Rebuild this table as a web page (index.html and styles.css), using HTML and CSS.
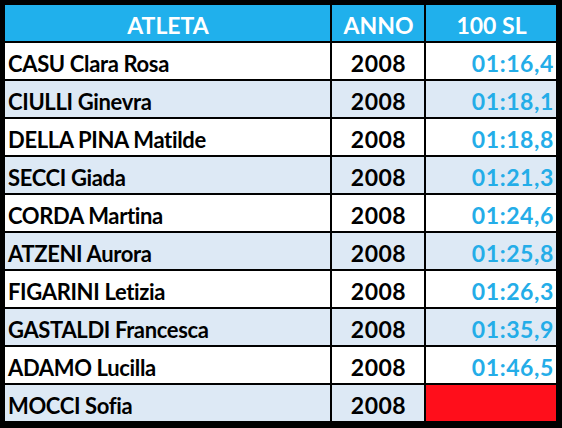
FILE: index.html
```html
<!DOCTYPE html>
<html lang="it">
<head>
<meta charset="utf-8">
<title>Risultati 100 SL</title>
<link rel="stylesheet" href="styles.css">
</head>
<body>
<div class="sheet">
  <div class="cell head">ATLETA</div><div class="cell head">ANNO</div><div class="cell head">100 SL</div>
  <div class="cell name">CASU Clara Rosa</div><div class="cell year">2008</div><div class="cell time">01:16,4</div>
  <div class="cell name alt">CIULLI Ginevra</div><div class="cell year alt">2008</div><div class="cell time alt">01:18,1</div>
  <div class="cell name">DELLA PINA Matilde</div><div class="cell year">2008</div><div class="cell time">01:18,8</div>
  <div class="cell name alt">SECCI Giada</div><div class="cell year alt">2008</div><div class="cell time alt">01:21,3</div>
  <div class="cell name">CORDA Martina</div><div class="cell year">2008</div><div class="cell time">01:24,6</div>
  <div class="cell name alt">ATZENI Aurora</div><div class="cell year alt">2008</div><div class="cell time alt">01:25,8</div>
  <div class="cell name">FIGARINI Letizia</div><div class="cell year">2008</div><div class="cell time">01:26,3</div>
  <div class="cell name alt">GASTALDI Francesca</div><div class="cell year alt">2008</div><div class="cell time alt">01:35,9</div>
  <div class="cell name">ADAMO Lucilla</div><div class="cell year">2008</div><div class="cell time">01:46,5</div>
  <div class="cell name alt">MOCCI Sofia</div><div class="cell year alt">2008</div><div class="cell time missing"></div>
</div>
</body>
</html>
```
FILE: styles.css
```css
html, body {
  margin: 0;
  padding: 0;
  background: #000;
}
.sheet {
  width: 562px;
  height: 428px;
  box-sizing: border-box;
  background: #000;
  padding: 5px 6px 6px 5px;
  display: grid;
  grid-template-columns: 325px 92px 130px;
  grid-template-rows: 36px repeat(10, 36px);
  gap: 2px;
  font-family: Lato, "Liberation Sans", sans-serif;
  font-weight: 700;
  font-size: 22px;
}
.cell {
  background: #fff;
  color: #000;
  display: flex;
  align-items: center;
  padding: 4px 2px 0 3px;
  box-sizing: border-box;
  white-space: nowrap;
  overflow: hidden;
}
.cell.alt {
  background: #dde9f5;
}
.head {
  background: #20b0ec;
  color: #fff;
  justify-content: center;
  font-size: 23px;
}
.name {
  letter-spacing: -0.35px;
}
.year {
  justify-content: center;
  font-size: 23px;
  letter-spacing: 0.5px;
}
.time {
  justify-content: flex-end;
  color: #24ade8;
  font-size: 23px;
  letter-spacing: 0.6px;
}
.missing {
  background: #ff0e1b;
}
```
